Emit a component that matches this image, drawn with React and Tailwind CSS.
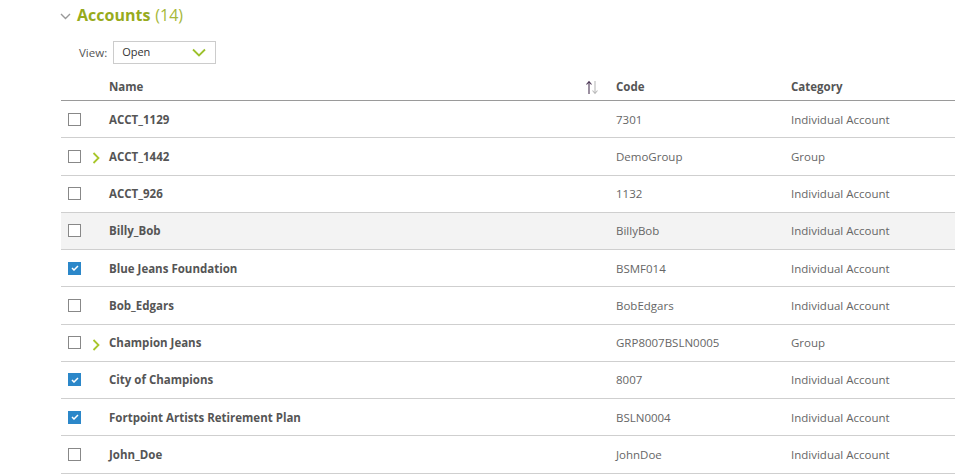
import { useState } from 'react';

const rows = [
  { name: 'ACCT_1129', code: '7301', category: 'Individual Account', checked: false, group: false },
  { name: 'ACCT_1442', code: 'DemoGroup', category: 'Group', checked: false, group: true },
  { name: 'ACCT_926', code: '1132', category: 'Individual Account', checked: false, group: false },
  { name: 'Billy_Bob', code: 'BillyBob', category: 'Individual Account', checked: false, group: false, hover: true },
  { name: 'Blue Jeans Foundation', code: 'BSMF014', category: 'Individual Account', checked: true, group: false },
  { name: 'Bob_Edgars', code: 'BobEdgars', category: 'Individual Account', checked: false, group: false },
  { name: 'Champion Jeans', code: 'GRP8007BSLN0005', category: 'Group', checked: false, group: true },
  { name: 'City of Champions', code: '8007', category: 'Individual Account', checked: true, group: false },
  { name: 'Fortpoint Artists Retirement Plan', code: 'BSLN0004', category: 'Individual Account', checked: true, group: false },
  { name: 'John_Doe', code: 'JohnDoe', category: 'Individual Account', checked: false, group: false },
];

function Checkbox({ checked }) {
  if (checked) {
    return (
      <span className="w-[13px] h-[13px] bg-[#2b87c9] flex items-center justify-center">
        <svg width="8" height="6" viewBox="0 0 8 6">
          <path d="M1 3 L3 5 L7 1" stroke="#fff" strokeWidth="1.5" fill="none" />
        </svg>
      </span>
    );
  }
  return <span className="w-[13px] h-[13px] border border-[#888] bg-white" />;
}

export default function App() {
  const [view] = useState('Open');

  return (
    <div className="w-[955px] h-[475px] bg-white overflow-hidden text-[#555]" style={{ fontFamily: '"Open Sans", sans-serif' }}>
      <div className="pl-[60px] pt-[2px] flex items-center h-[24px] mt-[2px]">
        <svg width="11" height="7" viewBox="0 0 11 7" className="mr-[6px] mt-[2px]">
          <path d="M1 1 L5.5 5.5 L10 1" stroke="#999" strokeWidth="1.4" fill="none" />
        </svg>
        <span className="text-[16px] font-bold text-[#97ab1c] leading-none">Accounts</span>
        <span className="text-[16px] text-[#a6b83a] leading-none ml-[5px]">(14)</span>
      </div>

      <div className="flex items-center mt-[15px] pl-[79px]">
        <span className="text-[11.5px] text-[#555] mr-[6px]">View:</span>
        <div className="w-[103px] h-[23px] border border-[#ccc] flex items-center justify-between pl-[8px] pr-[9px]">
          <span className="text-[11px] text-[#333]">{view}</span>
          <svg width="14" height="9" viewBox="0 0 14 9">
            <path d="M1 1.5 L7 7.5 L13 1.5" stroke="#9cc12c" strokeWidth="1.8" fill="none" />
          </svg>
        </div>
      </div>

      <div className="ml-[61px] mt-[10px]">
        <div className="flex items-center h-[27px] border-b border-[#9a9a9a] text-[11.5px] font-bold text-[#555]">
          <div className="w-[48px]" />
          <div className="w-[491px] flex items-center justify-between pr-[1px]">
            <span>Name</span>
            <svg width="14" height="15" viewBox="0 0 14 15">
              <path d="M4 14 V2 M1.5 4.5 L4 1.5 L6.5 4.5" stroke="#4a3553" strokeWidth="1.1" fill="none" />
              <path d="M10 1 V13 M7.5 10.5 L10 13.5 L12.5 10.5" stroke="#bbb" strokeWidth="1.1" fill="none" />
            </svg>
          </div>
          <div className="w-[16px]" />
          <div className="w-[175px]">Code</div>
          <div className="flex-1">Category</div>
        </div>

        {rows.map((row) => (
          <div
            key={row.name}
            className={`flex items-center h-[37.25px] border-b border-[#cfcfcf] text-[11.5px] ${row.hover ? 'bg-[#f3f3f3]' : 'bg-white'}`}
          >
            <div className="w-[48px] flex items-center pl-[7px]">
              <Checkbox checked={row.checked} />
              {row.group && (
                <svg width="8" height="12" viewBox="0 0 8 12" className="ml-[11px] mt-[4px]">
                  <path d="M1.5 1 L6.5 6 L1.5 11" stroke="#a8c62a" strokeWidth="1.8" fill="none" />
                </svg>
              )}
            </div>
            <div className="w-[507px] font-bold text-[#555]">{row.name}</div>
            <div className="w-[175px] text-[#666]">{row.code}</div>
            <div className="flex-1 text-[#666]">{row.category}</div>
          </div>
        ))}
      </div>
    </div>
  );
}
